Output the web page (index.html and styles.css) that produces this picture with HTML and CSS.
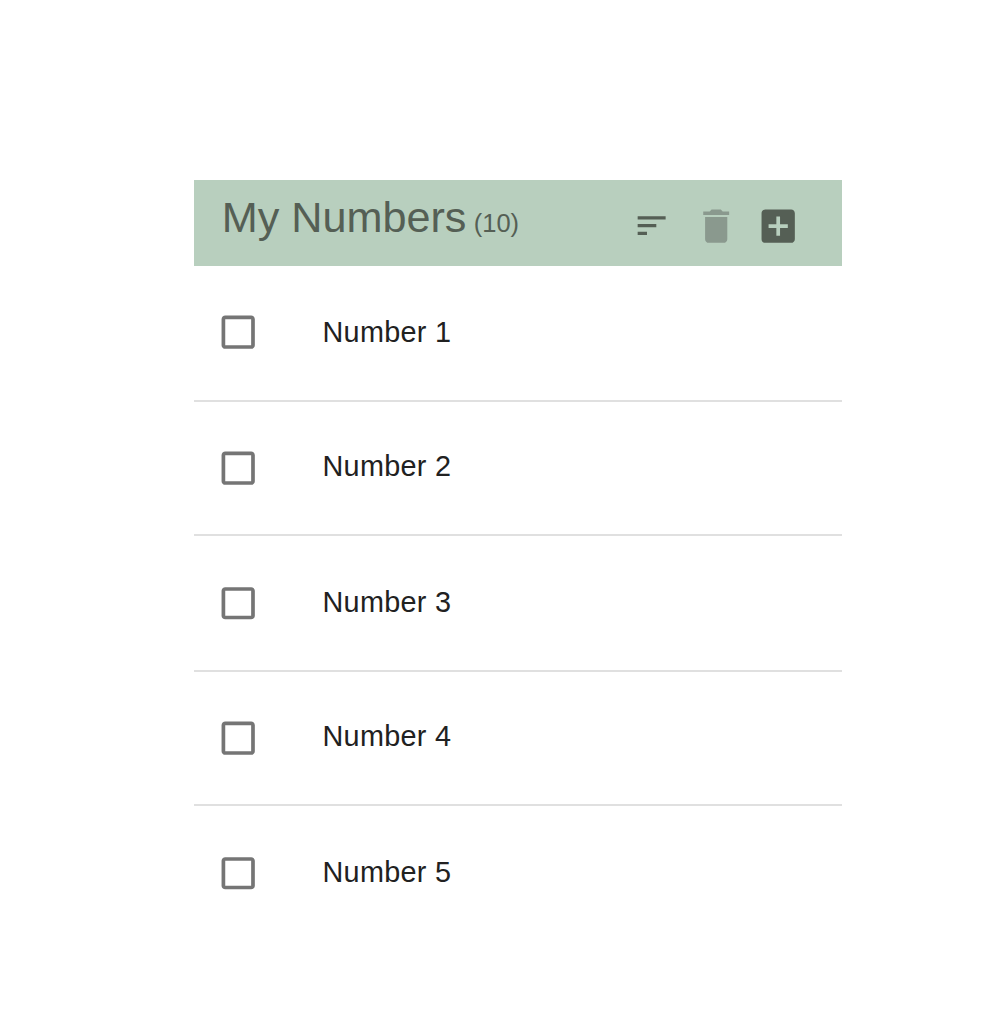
FILE: index.html
```html
<!DOCTYPE html>
<html lang="en">
<head>
<meta charset="utf-8">
<title>My Numbers</title>
<link rel="stylesheet" href="styles.css">
</head>
<body>
<svg class="defs" width="0" height="0">
  <symbol id="box" viewBox="0 0 24 24" preserveAspectRatio="none"><path d="M19 5v14H5V5h14m0-2H5c-1.100 0-2 .9-2 2v14c0 1.100.9 2 2 2h14c1.100 0 2-.9 2-2V5c0-1.100-.9-2-2-2z"/></symbol>
</svg>
<main class="panel">
  <header class="toolbar">
    <h1 class="title">My Numbers<span class="count">(10)</span></h1>
    <div class="actions">
      <svg class="icon sort" viewBox="0 0 24 24"><path d="M3 18h6v-2H3v2zM3 6v2h18V6H3zm0 7h12v-2H3v2z"/></svg>
      <svg class="icon delete" viewBox="0 0 24 24"><path d="M6 19c0 1.100.9 2 2 2h8c1.100 0 2-.9 2-2V7H6v12zM19 4h-3.500l-1-1h-5l-1 1H5v2h14V4z"/></svg>
      <svg class="icon add" viewBox="0 0 24 24"><path d="M19 3H5c-1.110 0-2 .9-2 2v14c0 1.100.89 2 2 2h14c1.100 0 2-.9 2-2V5c0-1.100-.9-2-2-2zm-1.800 10H13v4.200h-2V13H6.800v-2H11V6.800h2V11h4.200v2z"/></svg>
    </div>
  </header>
  <ul class="list">
    <li class="row tall"><svg class="check"><use href="#box"/></svg><span class="label">Number 1</span></li>
    <li class="row"><svg class="check"><use href="#box"/></svg><span class="label">Number 2</span></li>
    <li class="row tall"><svg class="check short"><use href="#box"/></svg><span class="label">Number 3</span></li>
    <li class="row"><svg class="check"><use href="#box"/></svg><span class="label">Number 4</span></li>
    <li class="row tall"><svg class="check short"><use href="#box"/></svg><span class="label">Number 5</span></li>
  </ul>
</main>
</body>
</html>
```
FILE: styles.css
```css
* { box-sizing: border-box; }

body {
  margin: 0;
  padding: 180px 166px 0 194px;
  background: #fff;
  font-family: "Liberation Sans", Arial, sans-serif;
}

.defs { display: block; }

.toolbar {
  display: flex;
  justify-content: space-between;
  height: 86px;
  padding: 0 42px 0 27.700px;
  background: #b8cfbe;
  color: #555f55;
}

.title {
  margin: 0;
  padding-top: 12px;
  font-size: 43.200px;
  font-weight: 400;
  line-height: 50px;
  white-space: nowrap;
}

.count {
  margin-left: 7.300px;
  font-size: 25.500px;
}

.actions {
  display: flex;
  align-items: center;
  padding-top: 5.600px;
}

.icon {
  width: 44.400px;
  height: 44.400px;
  fill: currentColor;
}

.sort {
  width: 37.300px;
  height: 37.300px;
  margin-right: 23.400px;
}

.delete {
  margin-right: 17.700px;
  fill: #8a998e;
}

.list {
  margin: 0;
  padding: 0;
  list-style: none;
}

.row {
  display: flex;
  align-items: flex-start;
  height: 134px;
  padding: 43.700px 0 0 21.600px;
  border-bottom: 2px solid #e0e0e0;
}

.row.tall { height: 136px; }
.row:last-child { border-bottom: 0; }

.check {
  width: 44.400px;
  height: 44.400px;
  fill: #757575;
}

.check.short {
  height: 42.600px;
  margin-top: 2px;
}

.label {
  margin: 4.300px 0 0 62.500px;
  color: #212121;
  font-size: 28.800px;
  line-height: 32px;
  letter-spacing: 0.300px;
}

.tall .label { margin-top: 6.300px; }
```
